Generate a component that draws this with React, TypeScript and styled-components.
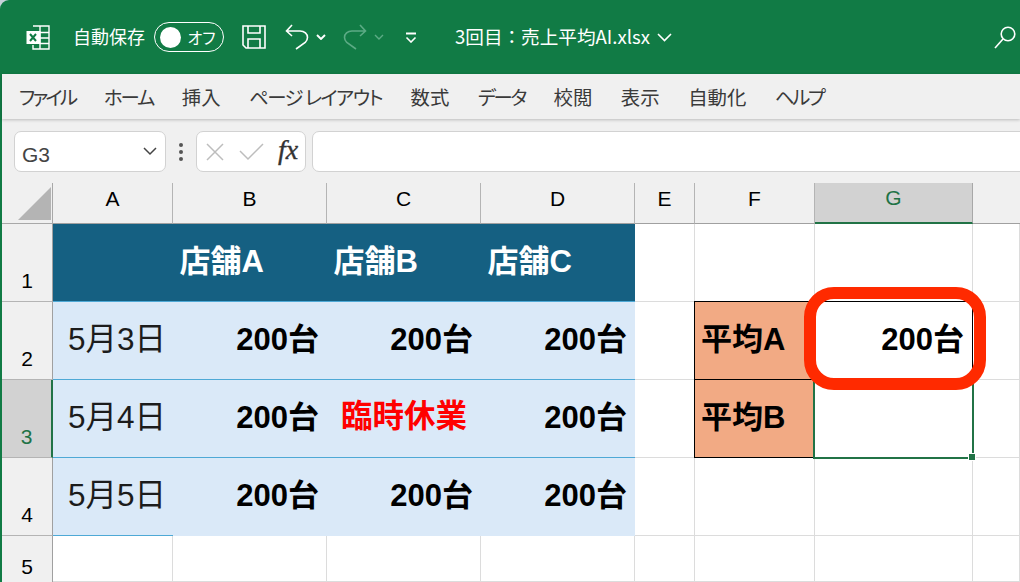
import React from "react";
import styled, { createGlobalStyle } from "styled-components";

const FONT = `"Noto Sans CJK JP", "Noto Sans", sans-serif`;
const CELL_FONT = `"Liberation Sans", "Noto Sans CJK JP", sans-serif`;

const Global = createGlobalStyle`
  html, body { margin: 0; padding: 0; background: #c8d2da; overflow: hidden; }
  body { font-family: ${FONT}; }
`;

const Page = styled.div`
  width: 1020px; height: 582px; display: flex; flex-direction: column; overflow: hidden;
`;

const TitleBar = styled.header`
  height: 74px; flex: none; background: #117b45; border-top-left-radius: 9px;
  display: flex; align-items: center; color: #fff; padding-left: 26px; box-sizing: border-box;
`;

const TitleIcon = styled.svg<{ $ml?: number; $w: number; $h: number }>`
  width: ${p => p.$w}px; height: ${p => p.$h}px; margin-left: ${p => p.$ml ?? 0}px; flex: none; display: block;
`;

const AutoSave = styled.span`
  font-size: 18px; margin-left: 23px; white-space: nowrap; line-height: 1; padding-bottom: 2px;
`;

const Toggle = styled.div`
  width: 70px; height: 30px; margin-left: 9px; box-sizing: border-box; border: 1.5px solid #fff; border-radius: 15px;
  display: flex; align-items: center; padding-left: 4.5px; flex: none;
`;
const Knob = styled.span`
  width: 21px; height: 21px; border-radius: 50%; background: #fff; flex: none;
`;
const ToggleText = styled.span`
  font-size: 16px; margin-left: 7px; line-height: 1; white-space: nowrap; font-feature-settings: "palt";
`;
const FileName = styled.span`
  font-size: 18.6px; margin-left: 38px; white-space: nowrap; line-height: 1; padding-bottom: 1px;
`;

const Body = styled.div`
  flex: 1; border-left: 2px solid #117b45; background: #f0f0f0; display: flex; flex-direction: column; min-height: 0;
`;

const TabBar = styled.nav`
  height: 45px; flex: none; background: #f0f0f0; display: flex; align-items: center; gap: 28.5px;
  padding-left: 17px; box-shadow: 0 1px 3px rgba(0,0,0,.22); position: relative; z-index: 1;
`;
const Tab = styled.span<{ $track?: number }>`
  font-size: 19.4px; color: #3a3a3a; white-space: pre; line-height: 1; font-weight: 400; font-feature-settings: "palt";
  letter-spacing: ${p => p.$track ?? 0}px;
`;

const FormulaRow = styled.div`
  height: 64px; flex: none; display: flex; align-items: flex-start; padding: 12px 0 0 12px; box-sizing: border-box; overflow: hidden;
`;
const Field = styled.div<{ $w: number; $ml?: number }>`
  width: ${p => p.$w}px; height: 41px; margin-left: ${p => p.$ml ?? 0}px; flex: none; box-sizing: border-box;
  background: #fff; border: 1px solid #d2d2d2; border-radius: 7px; display: flex; align-items: center;
`;
const NameText = styled.span`
  font-family: ${CELL_FONT}; font-size: 21px; color: #444; margin-left: 7px; line-height: 1; flex: 1; padding-top: 5px;
`;
const Dots = styled.div`
  width: 4px; margin-left: 13px; height: 41px; flex: none; display: flex; flex-direction: column; justify-content: center; gap: 3px;
`;
const Dot = styled.span`
  width: 4px; height: 4px; border-radius: 50%; background: #555;
`;
const FxLabel = styled.i`
  font-family: "Liberation Serif", serif; font-size: 28px; font-weight: 400; font-style: italic; color: #333; line-height: 1; margin-left: 14px; padding-bottom: 3px;
  -webkit-text-stroke: 0.35px #333;
`;

const Sheet = styled.div`
  position: relative; flex: 1; display: grid; background: #fff; min-height: 0; font-family: ${CELL_FONT};
  grid-template-columns: 51px 120px 154px 154px 154px 60px 120px 158px 47px;
  grid-template-rows: 41px 78px 78px 78px 78px 46px;
`;

const Corner = styled.div`
  background: #f0f0f0; border-right: 1px solid #a8a8a8; border-bottom: 1px solid #a8a8a8; box-sizing: border-box; display: flex; align-items: flex-end; justify-content: flex-end; padding: 0 1px 3px 0;
`;
const ColHead = styled.div<{ $active?: boolean; $blank?: boolean }>`
  box-sizing: border-box; display: flex; align-items: center; justify-content: center; font-size: 21px; line-height: 1; padding-bottom: 10px;
  background: ${p => (p.$active ? "#d2d2d2" : "#f0f0f0")}; color: ${p => (p.$active ? "#217346" : "#000")};
  border-right: ${p => (p.$blank ? "none" : p.$active ? "1px solid #a8a8a8" : "1px solid #b4b4b4")};
  border-bottom: ${p => (p.$active ? "2px solid #217346" : "1px solid #a0a0a0")};
`;
const RowHead = styled.div<{ $active?: boolean; $last?: boolean }>`
  box-sizing: border-box; display: flex; align-items: flex-end; justify-content: center; font-size: 21px; line-height: 1;
  padding-bottom: ${p => (p.$last ? 5 : 10)}px;
  background: ${p => (p.$active ? "#d2d2d2" : "#f0f0f0")}; color: ${p => (p.$active ? "#217346" : "#000")};
  border-right: ${p => (p.$active ? "2px solid #217346" : "1px solid #a0a0a0")};
  border-bottom: ${p => (p.$last ? "none" : "1px solid #b4b4b4")};
`;
const Cell = styled.div`
  box-sizing: border-box; border-right: 1px solid #dcdcdc; border-bottom: 1px solid #dcdcdc; background: #fff;
`;
const BandCell = styled.div`
  box-sizing: border-box; background: #156082; border-bottom: 1px solid #4ea9d6; color: #fff; font-weight: 700; font-size: 31px; line-height: 1;
  display: flex; align-items: center; justify-content: flex-end; padding: 0 63px 2px 0; white-space: nowrap;
`;
const DataCell = styled.div<{ $noLine?: boolean }>`
  box-sizing: border-box; background: #dae9f8; border-bottom: ${p => (p.$noLine ? "none" : "1px solid #4ea9d6")};
  display: flex; align-items: center; line-height: 1; white-space: nowrap; color: #000; padding-bottom: 3px;
`;
const DateValue = styled(DataCell)`
  font-size: 31.5px; padding-left: 15px; font-weight: 400; color: #1c1c1c; padding-bottom: 1px;
`;
const Count = styled(DataCell)`
  font-size: 31px; font-weight: 700; justify-content: flex-end; padding-right: 8px;
`;
const Closed = styled(DataCell)`
  font-size: 31.5px; font-weight: 700; color: #ff0000; justify-content: center;
`;
const LabelCell = styled.div`
  box-sizing: border-box; background: #f2aa84; border: 1px solid #000; margin: -1px 0 0 -1px;
  display: flex; align-items: center; padding: 0 0 3px 6px; font-size: 31px; font-weight: 700; color: #000; line-height: 1; white-space: nowrap;
`;
const ResultCell = styled.div`
  box-sizing: border-box; background: #fff; border-top: 1px solid #000; border-right: 1px solid #000; margin-top: -1px;
  display: flex; align-items: center; justify-content: flex-end; padding: 0 8px 3px 0; font-size: 31px; font-weight: 700; color: #000; line-height: 1;
`;
const Selected = styled.div`
  position: relative; box-sizing: border-box; background: #fff; margin: -1px -1px -1px -2px; border: 2px solid #217346;
`;
const Handle = styled.span`
  position: absolute; right: -4px; bottom: -4px; width: 6px; height: 6px; background: #217346; border: 1px solid #fff;
`;
const Callout = styled.div`
  position: absolute; left: 802px; top: 104px; width: 182px; height: 103px; box-sizing: border-box;
  border: 12px solid #ff2a00; border-radius: 30px; pointer-events: none;
`;

const ws = { fill: "none", stroke: "#fff", strokeWidth: 1.6 };
const cols = ["B", "C", "D"];
const tabs: [string, number][] = [
  ["ファイル", -2.7], ["ホーム", -2], ["挿入", 0], ["ページ レイアウト", -1.5], ["数式", 0],
  ["データ", -2.3], ["校閲", 0], ["表示", 0], ["自動化", 0], ["ヘルプ", -2.3],
];

export default function App() {
  return (
    <Page>
      <Global />
      <TitleBar>
        <TitleIcon $w={24} $h={25} viewBox="0 0 24 25">
          <path d="M7 1h16v23H7v-4M23 7.500H14M23 13H14M23 18.500H14M14 1v23" fill="none" stroke="#fff" strokeWidth="1.400" />
          <rect x="0.500" y="6" width="14" height="13" fill="#fff" />
          <path d="M4 9l6 7M10 9l-6 7" stroke="#117b45" strokeWidth="2" fill="none" />
        </TitleIcon>
        <AutoSave>自動保存</AutoSave>
        <Toggle><Knob /><ToggleText>オフ</ToggleText></Toggle>
        <TitleIcon $ml={18} $w={24} $h={24} viewBox="0 0 24 24">
          <path d="M1 1h22v22H4l-3-3zM6 1v7h12V1M6 23v-9h12v9" {...ws} />
        </TitleIcon>
        <TitleIcon $ml={19} $w={24} $h={26} viewBox="0 0 24 26">
          <path d="M7 1 1.500 7 7 12M2 7h13c4.500 0 7.500 3 7.500 6.500 0 2-1 3.600-2.300 5L11 25" {...ws} />
        </TitleIcon>
        <TitleIcon $ml={7} $w={10} $h={6} viewBox="0 0 10 6">
          <path d="M1 1l4 4 4-4" {...ws} strokeWidth={1.9} />
        </TitleIcon>
        <TitleIcon $ml={17} $w={24} $h={26} viewBox="0 0 24 26">
          <path d="M17 1l5.500 6L17 12M22 7H9C4.500 7 1.500 10 1.500 13.500c0 2 1 3.600 2.300 5L13 25" fill="none" stroke="#5cab85" strokeWidth="1.600" />
        </TitleIcon>
        <TitleIcon $ml={7} $w={10} $h={6} viewBox="0 0 10 6">
          <path d="M1 1l4 4 4-4" fill="none" stroke="#5cab85" strokeWidth="1.400" />
        </TitleIcon>
        <TitleIcon $ml={21} $w={12} $h={11} viewBox="0 0 12 11">
          <path d="M1 1.500h10" stroke="#fff" strokeWidth="2" fill="none" />
          <path d="M1.500 5.500L6 10l4.500-4.500" {...ws} />
        </TitleIcon>
        <FileName>3回目：売上平均AI.xlsx</FileName>
        <TitleIcon $ml={7} $w={15} $h={9} viewBox="0 0 15 9">
          <path d="M1 1l6.500 6.500L14 1" {...ws} />
        </TitleIcon>
        <TitleIcon $ml={322} $w={22} $h={23} viewBox="0 0 22 23">
          <circle cx="14" cy="8" r="6.800" {...ws} />
          <path d="M9 13 1 22" {...ws} />
        </TitleIcon>
      </TitleBar>
      <Body>
        <TabBar>
          {tabs.map(([t, track]) => (
            <Tab key={t} $track={track}>{t}</Tab>
          ))}
        </TabBar>
        <FormulaRow>
          <Field $w={152}>
            <NameText>G3</NameText>
            <TitleIcon $w={14} $h={9} viewBox="0 0 14 9" style={{ marginRight: 8 }}>
              <path d="M1 1l6 6 6-6" fill="none" stroke="#444" strokeWidth="1.500" />
            </TitleIcon>
          </Field>
          <Dots><Dot /><Dot /><Dot /></Dots>
          <Field $w={110} $ml={13}>
            <TitleIcon $ml={9} $w={18} $h={18} viewBox="0 0 18 18">
              <path d="M1 1l16 16M17 1 1 17" fill="none" stroke="#bdbdbd" strokeWidth="1.500" />
            </TitleIcon>
            <TitleIcon $ml={15} $w={25} $h={18} viewBox="0 0 25 18">
              <path d="M1 8l8 8L24 1" fill="none" stroke="#bdbdbd" strokeWidth="1.500" />
            </TitleIcon>
            <FxLabel>fx</FxLabel>
          </Field>
          <Field $w={760} $ml={6} />
        </FormulaRow>
        <Sheet>
          <Corner>
            <TitleIcon $w={33} $h={33} viewBox="0 0 33 33"><path d="M33 0v33H0z" fill="#b4b4b4" /></TitleIcon>
          </Corner>
          {["A", "B", "C", "D", "E", "F"].map(c => <ColHead key={c}>{c}</ColHead>)}
          <ColHead $active>G</ColHead>
          <ColHead $blank />

          <RowHead>1</RowHead>
          <BandCell />
          {cols.map((c, i) => <BandCell key={c}>店舗{"ABC"[i]}</BandCell>)}
          <Cell /><Cell /><Cell /><Cell />

          <RowHead>2</RowHead>
          <DateValue>5月3日</DateValue>
          {cols.map(c => <Count key={c}>200台</Count>)}
          <Cell />
          <LabelCell>平均A</LabelCell>
          <ResultCell>200台</ResultCell>
          <Cell />

          <RowHead $active>3</RowHead>
          <DateValue>5月4日</DateValue>
          <Count>200台</Count>
          <Closed>臨時休業</Closed>
          <Count>200台</Count>
          <Cell />
          <LabelCell>平均B</LabelCell>
          <Selected><Handle /></Selected>
          <Cell />

          <RowHead>4</RowHead>
          <DateValue>5月5日</DateValue>
          {cols.map(c => <Count key={c} $noLine>200台</Count>)}
          <Cell /><Cell /><Cell /><Cell />

          <RowHead $last>5</RowHead>
          <Cell /><Cell /><Cell /><Cell /><Cell /><Cell /><Cell /><Cell />
          <Callout />
        </Sheet>
      </Body>
    </Page>
  );
}
